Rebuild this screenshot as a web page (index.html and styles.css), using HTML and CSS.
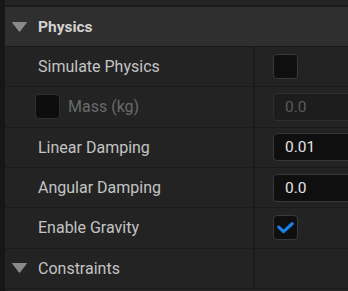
FILE: index.html
```html
<!DOCTYPE html>
<html lang="en">
<head>
  <meta charset="UTF-8">
  <meta name="viewport" content="width=device-width, initial-scale=1.0">
  <title>Details - Physics</title>
  <link rel="stylesheet" href="styles.css">
</head>
<body>
  <div class="panel">
    <div class="top-strip"></div>

    <!-- Physics category -->
    <div class="category">
      <svg class="arrow" width="15" height="10" viewBox="0 0 15 10"><polygon points="0.5,0.5 14.5,0.5 7.5,9.5" /></svg>
      <span>Physics</span>
    </div>

    <div class="row">
      <div class="name">Simulate Physics</div>
      <div class="value">
        <div class="checkbox"></div>
      </div>
    </div>

    <div class="row">
      <div class="name name-override">
        <div class="checkbox disabled"></div>
        <span class="muted">Mass (kg)</span>
      </div>
      <div class="value">
        <div class="field disabled">0.0</div>
      </div>
    </div>

    <div class="row">
      <div class="name">Linear Damping</div>
      <div class="value">
        <div class="field">0.01</div>
      </div>
    </div>

    <div class="row">
      <div class="name">Angular Damping</div>
      <div class="value">
        <div class="field">0.0</div>
      </div>
    </div>

    <div class="row">
      <div class="name">Enable Gravity</div>
      <div class="value">
        <div class="checkbox checked">
          <svg width="17" height="12" viewBox="0 0 17 12"><polyline points="1.8,5.2 6.5,9.6 15.2,1.8" /></svg>
        </div>
      </div>
    </div>

    <!-- Collapsed subcategory -->
    <div class="row">
      <div class="name sub">
        <svg class="arrow" width="15" height="10" viewBox="0 0 15 10"><polygon points="0.5,0.5 14.5,0.5 7.5,9.5" /></svg>
        <span>Constraints</span>
      </div>
      <div class="value"></div>
    </div>
  </div>
</body>
</html>
```

FILE: styles.css
```css
html, body {
  margin: 0;
  height: 100%;
  background-color: #232323;
  overflow: hidden;
}

body {
  font-family: Roboto, "Noto Sans", Arial, sans-serif;
  font-size: 16px;
  color: #c4c4c4;
}

/* Panel */
.panel {
  border-left: 5px solid #161616;
  height: 100%;
  background-color: #232323;
  overflow: hidden;
}

.top-strip {
  height: 5px;
  background-color: #242424;
  border-bottom: 2px solid #1a1a1a;
}

/* Category header */
.category {
  display: flex;
  align-items: center;
  height: 39px;
  padding-left: 7px;
  background-color: #2f2f2f;
  border-bottom: 1px solid #1a1a1a;
  font-weight: bold;
  font-size: 15.5px;
  color: #d2d2d2;
}

.arrow {
  flex: none;
  margin-right: 11px;
}

.arrow polygon {
  fill: #8a8a8a;
  stroke: #8a8a8a;
  stroke-width: 1;
  stroke-linejoin: round;
}

/* Property rows */
.row {
  display: flex;
  height: 39.33px;
  border-bottom: 1px solid #1a1a1a;
  background-color: #232323;
}

.name {
  flex: none;
  display: flex;
  align-items: center;
  width: 215px;
  padding-left: 33px;
  border-right: 2px solid #1a1a1a;
}

.name-override {
  padding-left: 30px;
  width: 218px;
  gap: 8px;
}

.name.sub {
  padding-left: 7px;
  width: 241px;
}

.muted {
  color: #6a6a6a;
}

.value {
  flex: 1;
  min-width: 0;
  display: flex;
  align-items: center;
  padding-left: 18px;
  overflow: hidden;
}

/* Checkbox */
.checkbox {
  box-sizing: border-box;
  width: 25px;
  height: 25px;
  flex: none;
  display: flex;
  align-items: center;
  justify-content: center;
  background-color: #0f0f0f;
  border: 1px solid #3a3a3a;
  border-radius: 4px;
}

.checkbox.disabled {
  background-color: #0d0d0d;
  border-color: #2e2e2e;
}

.checkbox polyline {
  fill: none;
  stroke: #1a80e8;
  stroke-width: 3.2;
  stroke-linecap: round;
  stroke-linejoin: round;
}

/* Numeric field */
.field {
  box-sizing: border-box;
  flex: none;
  width: 110px;
  height: 28px;
  display: flex;
  align-items: center;
  padding-left: 11px;
  background-color: #0f0f0f;
  border: 1px solid #383838;
  border-radius: 4px;
  color: #e4e4e4;
  font-size: 15.5px;
}

.field.disabled {
  background-color: #1d1d1d;
  border-color: #2e2e2e;
  color: #5c5c5c;
}
```
